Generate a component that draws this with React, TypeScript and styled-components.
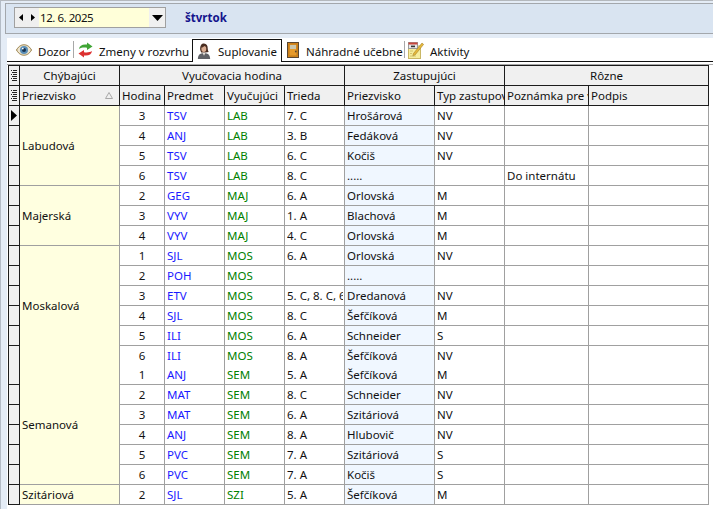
import React from "react";
import styled, { createGlobalStyle } from "styled-components";

const Global = createGlobalStyle`
  html, body { margin: 0; padding: 0; background: #e4ecf6; }
  * { box-sizing: border-box; }
`;

const FONT = `"Noto Sans", "Open Sans", sans-serif`;

const Root = styled.div`
  width: 713px;
  height: 509px;
  overflow: hidden;
  display: flex;
  flex-direction: column;
  background: #e4ecf6;
  border-top: 1px solid #b4b8bd;
  border-left: 1px solid #b4bcc6;
  font-family: ${FONT};
  font-size: 11.5px;
  color: #111;
`;

const Toolbar = styled.div`
  margin: 2px 0 0 4px;
  height: 31px;
  flex: none;
  display: flex;
  align-items: center;
  padding: 0 0 2px 8px;
  background: #d9e4f1;
  border: 1px solid #a3a7ac;
  border-right: none;
`;

const DatePicker = styled.div`
  width: 152px;
  height: 21px;
  display: flex;
  border: 1px solid #a0a0a0;
  background: #f0f0f0;
`;

const NavButton = styled.div`
  width: 11px;
  margin-right: 1px;
  display: flex;
  align-items: center;
  justify-content: center;
  background: #efefef;
`;

const DateValue = styled.div`
  width: 110px;
  background: #ffffd9;
  padding-left: 1px;
  font-size: 11.5px;
  letter-spacing: -0.45px;
  line-height: 19px;
  white-space: nowrap;
`;

const DropButton = styled.div`
  flex: 1;
  display: flex;
  align-items: center;
  justify-content: center;
  background: #f0f0f0;
`;

const Weekday = styled.div`
  margin-left: 19px;
  font-weight: 700;
  font-size: 11.5px;
  color: #14148c;
`;

const Panel = styled.div`
  flex: 1;
  margin: 4px 0 0 6px;
  background: #fff;
  display: flex;
  flex-direction: column;
`;

const TabBar = styled.div`
  height: 24px;
  flex: none;
  display: flex;
  align-items: flex-end;
  border-bottom: 1px solid #111;
`;

const Tab = styled.div<{ $w: number; $pad: number; $gap: number; $active?: boolean }>`
  width: ${(p) => p.$w}px;
  height: 23px;
  flex: none;
  display: flex;
  align-items: center;
  padding-left: ${(p) => p.$pad}px;
  padding-top: ${(p) => (p.$active ? 1 : 3)}px;
  white-space: nowrap;
  background: #fff;
  ${(p) =>
    p.$active ? `border: 1px solid #111; border-bottom: none; margin-bottom: -1px;` : ""}
  & > svg {
    flex: none;
    margin-right: ${(p) => p.$gap}px;
    margin-top: -2px;
  }
`;

const TabDivider = styled.span`
  flex: none;
  width: 1px;
  height: 17px;
  margin-left: auto;
  margin-top: -3px;
  background: #a8a8a8;
`;

const Rule = styled.div`
  margin-top: 2px;
  height: 1px;
  flex: none;
  background: #a8a8a8;
`;

const Table = styled.table`
  margin-left: 1px;
  width: 701px;
  table-layout: fixed;
  border-collapse: separate;
  border-spacing: 0;
  font-size: 11.5px;
  line-height: 14px;
`;

const Column = styled.col<{ $w: number }>`
  width: ${(p) => p.$w}px;
`;

const HeadCell = styled.th<{ $top?: boolean; $center?: boolean; $corner?: boolean }>`
  height: ${(p) => (p.$top ? 21 : 20)}px;
  padding: ${(p) => (p.$corner ? "0" : "0 2px")};
  font-weight: 400;
  text-align: ${(p) => (p.$center ? "center" : "left")};
  background: #f0f0f0;
  border-right: 1px solid #1c1c1c;
  border-bottom: 1px solid #1c1c1c;
  ${(p) => (p.$top ? "border-top: 1px solid #1c1c1c;" : "")}
  ${(p) => (p.$corner ? "border-left: 1px solid #1c1c1c;" : "")}
  overflow: hidden;
  white-space: nowrap;
`;

const HeadRow = styled.span`
  display: flex;
  align-items: center;
  justify-content: space-between;
  padding-right: 4px;
`;

const Indicator = styled.td<{ $h: number; $open?: boolean }>`
  height: ${(p) => p.$h}px;
  padding: 0;
  background: #f0f0f0;
  border-left: 1px solid #1c1c1c;
  border-right: 1px solid #1c1c1c;
  border-bottom: ${(p) => (p.$open ? "none" : "1px solid #1c1c1c")};
`;

const GroupCell = styled.td<{ $open?: boolean }>`
  padding: 0 2px;
  background: #ffffe0;
  border-right: 1px solid #a0a0a0;
  border-bottom: ${(p) => (p.$open ? "none" : "1px solid #a0a0a0")};
  white-space: nowrap;
`;

const Cell = styled.td<{
  $open?: boolean;
  $center?: boolean;
  $color?: string;
  $bg?: string;
}>`
  padding: 0 2px;
  text-align: ${(p) => (p.$center ? "center" : "left")};
  color: ${(p) => p.$color ?? "#111"};
  background: ${(p) => p.$bg ?? "#fff"};
  border-right: 1px solid #a0a0a0;
  border-bottom: ${(p) => (p.$open ? "none" : "1px solid #a0a0a0")};
  overflow: hidden;
  white-space: nowrap;
`;

const Flush = styled.span`
  display: block;
  margin-right: -1px;
  overflow: hidden;
`;

const CenterIcon = styled.span`
  display: flex;
  align-items: center;
  justify-content: center;
  & > svg {
    flex: none;
    display: block;
  }
`;

const Tri = ({ dir }: { dir: "l" | "r" }) => (
  <svg width="4" height="7" viewBox="0 0 4 7">
    <path d={dir === "l" ? "M4 0 L0 3.5 L4 7 Z" : "M0 0 L4 3.5 L0 7 Z"} fill="#000" />
  </svg>
);

const EyeIcon = () => (
  <svg width="16" height="12" viewBox="0 0 16 12">
    <path d="M0.5 6 C3 1.5 6 0.8 8 0.8 C10 0.8 13 1.5 15.5 6 C13 10.5 10 11.2 8 11.2 C6 11.2 3 10.5 0.5 6 Z" fill="#ece4cf" stroke="#94793f" />
    <circle cx="8" cy="6" r="4" fill="#5b8fb8" />
    <circle cx="8" cy="6" r="2" fill="#17324f" />
    <circle cx="6.8" cy="4.6" r="0.9" fill="#fff" />
  </svg>
);

const SwapIcon = () => (
  <svg width="15" height="16" viewBox="0 0 15 16">
    <path d="M1 7 C1.5 3.5 4.5 2 9 2.6 L9 0.5 L14.5 4.5 L9 8 L9 5.8 C6 5.3 3.5 5.5 1 7 Z" fill="#3fa535" />
    <path d="M14 9 C13.5 12.5 10.5 14 6 13.4 L6 15.5 L0.5 11.5 L6 8 L6 10.2 C9 10.7 11.5 10.5 14 9 Z" fill="#dc3030" />
  </svg>
);

const PersonIcon = () => (
  <svg width="14" height="16" viewBox="0 0 14 17">
    <path d="M0.5 17 C0.5 12.5 2.5 10.8 7 10.5 C11.5 10.8 13.5 12.5 13.5 17 Z" fill="#5f6166" />
    <path d="M5.6 10.6 L7 13.5 L8.4 10.6 Z" fill="#e9e2da" />
    <path d="M3 7.5 C2.5 2.5 4.5 0.5 7 0.5 C9.8 0.5 11 2.8 11 6 C11 8 12 9.5 12 9.5 L8.5 10 L4 10 Z" fill="#4a2e22" />
    <ellipse cx="6.8" cy="6.2" rx="2.6" ry="3.4" fill="#d9ad92" />
    <path d="M4 5 C5.5 4.5 7.5 3.5 8.2 2.8 C9 3.8 9.6 4.6 9.8 5.5 L10 2.5 L6 1.5 Z" fill="#4a2e22" />
  </svg>
);

const DoorIcon = () => (
  <svg width="12" height="16" viewBox="0 0 12 16">
    <rect x="0.5" y="0.5" width="11" height="15" fill="#d98a1e" stroke="#5a4630" />
    <rect x="2" y="2" width="8" height="12" fill="#e79a2a" stroke="#b06a10" strokeWidth="0.7" />
    <rect x="3" y="3" width="6" height="4" fill="#c9c6ae" />
    <circle cx="8.8" cy="9.5" r="0.9" fill="#5a4630" />
  </svg>
);

const NoteIcon = () => (
  <svg width="16" height="17" viewBox="0 0 16 17">
    <rect x="0.5" y="4" width="12" height="12.5" fill="#f7ee9e" stroke="#c9b765" />
    <rect x="0.5" y="0.5" width="9" height="6" fill="#e9e9e9" stroke="#9a9a9a" />
    <rect x="0.5" y="0.5" width="9" height="2" fill="#c8473d" />
    <rect x="3" y="3.6" width="4" height="1.6" fill="#333" />
    <path d="M14 1 L15.6 2.4 L7 13 L4.8 14 L5.4 11.6 Z" fill="#e6b93c" stroke="#a5822a" strokeWidth="0.6" />
    <path d="M2 9 H5 M2 11.5 H4 M2 14 H8" stroke="#c9b765" strokeWidth="0.8" />
  </svg>
);

const ListIcon = () => (
  <svg width="6" height="11" viewBox="0 0 6 11" shapeRendering="crispEdges">
    {[0, 2, 4, 6, 8, 10].map((y) => (
      <React.Fragment key={y}>
        <rect x={y % 4 === 0 ? 0 : 1} y={y} width="1" height="1" fill="#222" />
        <rect x="2" y={y} width="4" height="1" fill="#222" />
      </React.Fragment>
    ))}
  </svg>
);

type R = [number, string, string, string, string, string, string?];

const groups: { name: string; rows: R[]; open?: boolean }[] = [
  {
    name: "Labudová",
    rows: [
      [3, "TSV", "LAB", "7. C", "Hrošárová", "NV"],
      [4, "ANJ", "LAB", "3. B", "Fedáková", "NV"],
      [5, "TSV", "LAB", "6. C", "Kočiš", "NV"],
      [6, "TSV", "LAB", "8. C", ".....", "", "Do internátu"],
    ],
  },
  {
    name: "Majerská",
    rows: [
      [2, "GEG", "MAJ", "6. A", "Orlovská", "M"],
      [3, "VYV", "MAJ", "1. A", "Blachová", "M"],
      [4, "VYV", "MAJ", "4. C", "Orlovská", "M"],
    ],
  },
  {
    name: "Moskalová",
    open: true,
    rows: [
      [1, "SJL", "MOS", "6. A", "Orlovská", "NV"],
      [2, "POH", "MOS", "", ".....", ""],
      [3, "ETV", "MOS", "5. C, 8. C, 6. A", "Dredanová", "NV"],
      [4, "SJL", "MOS", "8. C", "Šefčíková", "M"],
      [5, "ILI", "MOS", "6. A", "Schneider", "S"],
      [6, "ILI", "MOS", "8. A", "Šefčíková", "NV"],
    ],
  },
  {
    name: "Semanová",
    rows: [
      [1, "ANJ", "SEM", "5. A", "Šefčíková", "M"],
      [2, "MAT", "SEM", "8. C", "Schneider", "NV"],
      [3, "MAT", "SEM", "6. A", "Szitáriová", "NV"],
      [4, "ANJ", "SEM", "8. A", "Hlubovič", "NV"],
      [5, "PVC", "SEM", "7. A", "Szitáriová", "S"],
      [6, "PVC", "SEM", "7. A", "Kočiš", "S"],
    ],
  },
  { name: "Szitáriová", rows: [[2, "SJL", "SZI", "5. A", "Šefčíková", "M"]] },
];

const widths = [12, 100, 45, 60, 60, 60, 90, 70, 84, 120];

export default function App() {
  return (
    <Root>
      <Global />
      <Toolbar>
        <DatePicker>
          <NavButton>
            <Tri dir="l" />
          </NavButton>
          <NavButton>
            <Tri dir="r" />
          </NavButton>
          <DateValue>12. 6. 2025</DateValue>
          <DropButton>
            <svg width="11" height="6" viewBox="0 0 11 6">
              <path d="M0 0 H11 L5.5 6 Z" fill="#000" />
            </svg>
          </DropButton>
        </DatePicker>
        <Weekday>štvrtok</Weekday>
      </Toolbar>
      <Panel>
        <TabBar>
          <Tab $w={67} $pad={9} $gap={6}>
            <EyeIcon />
            Dozor
            <TabDivider />
          </Tab>
          <Tab $w={118} $pad={4} $gap={6}>
            <SwapIcon />
            Zmeny v rozvrhu
          </Tab>
          <Tab $w={90} $pad={4} $gap={7} $active>
            <PersonIcon />
            Suplovanie
          </Tab>
          <Tab $w={123} $pad={5} $gap={7}>
            <DoorIcon />
            Náhradné učebne
            <TabDivider />
          </Tab>
          <Tab $w={80} $pad={3} $gap={6}>
            <NoteIcon />
            Aktivity
          </Tab>
        </TabBar>
        <Rule />
        <Table>
          <colgroup>
            {widths.map((w, i) => (
              <Column key={i} $w={w} />
            ))}
          </colgroup>
          <thead>
            <tr>
              <HeadCell $top $corner>
                <CenterIcon>
                  <ListIcon />
                </CenterIcon>
              </HeadCell>
              <HeadCell $top $center>Chýbajúci</HeadCell>
              <HeadCell $top $center colSpan={4}>Vyučovacia hodina</HeadCell>
              <HeadCell $top $center colSpan={2}>Zastupujúci</HeadCell>
              <HeadCell $top $center colSpan={2}>Rôzne</HeadCell>
            </tr>
            <tr>
              <HeadCell $corner>
                <CenterIcon>
                  <ListIcon />
                </CenterIcon>
              </HeadCell>
              <HeadCell>
                <HeadRow>
                  Priezvisko
                  <svg width="8" height="7" viewBox="0 0 8 7">
                    <path d="M4 0.5 L7.5 6.5 H0.5 Z" fill="none" stroke="#a8a8a8" />
                  </svg>
                </HeadRow>
              </HeadCell>
              <HeadCell>Hodina</HeadCell>
              <HeadCell>Predmet</HeadCell>
              <HeadCell>Vyučujúci</HeadCell>
              <HeadCell>Trieda</HeadCell>
              <HeadCell>Priezvisko</HeadCell>
              <HeadCell>Typ zastupovania</HeadCell>
              <HeadCell>Poznámka pre vyuč.</HeadCell>
              <HeadCell>Podpis</HeadCell>
            </tr>
          </thead>
          <tbody>
            {groups.map((g) =>
              g.rows.map((r, i) => {
                const last = i === g.rows.length - 1;
                const open = last && !!g.open;
                const h = open ? 19 : 20;
                const first = g.name === "Labudová" && i === 0;
                return (
                  <tr key={g.name + i}>
                    <Indicator $h={h} $open={open}>
                      {first && (
                        <CenterIcon>
                          <svg width="6" height="11" viewBox="0 0 6 11">
                            <path d="M0 0 L6 5.5 L0 11 Z" fill="#000" />
                          </svg>
                        </CenterIcon>
                      )}
                    </Indicator>
                    {i === 0 && (
                      <GroupCell rowSpan={g.rows.length} $open={g.open}>
                        {g.name}
                      </GroupCell>
                    )}
                    <Cell $open={open} $center>{r[0]}</Cell>
                    <Cell $open={open} $color="#1a1aff">{r[1]}</Cell>
                    <Cell $open={open} $color="#008000">{r[2]}</Cell>
                    <Cell $open={open}><Flush>{r[3]}</Flush></Cell>
                    <Cell $open={open} $bg="#f0f7ff">{r[4]}</Cell>
                    <Cell $open={open}>{r[5]}</Cell>
                    <Cell $open={open}>{r[6]}</Cell>
                    <Cell $open={open} />
                  </tr>
                );
              })
            )}
          </tbody>
        </Table>
      </Panel>
    </Root>
  );
}
